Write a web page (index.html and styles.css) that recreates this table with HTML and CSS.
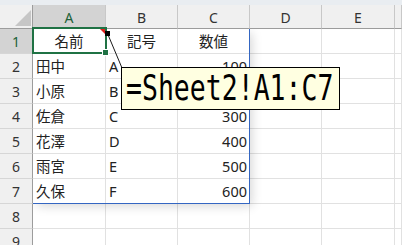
FILE: index.html
```
<!DOCTYPE html>
<html lang="ja">
<head>
<meta charset="utf-8">
<title>Sheet1</title>
<link rel="stylesheet" href="styles.css">
</head>
<body>
<div class="sheet">
  <div class="topbar"></div>
  <div class="grid">
    <div class="hd corner"><span class="corner-tri"></span></div>
    <div class="hd col sel">A</div>
    <div class="hd col">B</div>
    <div class="hd col">C</div>
    <div class="hd col">D</div>
    <div class="hd col">E</div>
    <div class="hd col"></div>

    <div class="hd row sel">1</div>
    <div class="c ctr">名前</div><div class="c ctr">記号</div><div class="c ctr">数値</div><div class="c"></div><div class="c"></div><div class="c"></div>

    <div class="hd row">2</div>
    <div class="c">田中</div><div class="c">A</div><div class="c num">100</div><div class="c"></div><div class="c"></div><div class="c"></div>

    <div class="hd row">3</div>
    <div class="c">小原</div><div class="c">B</div><div class="c num">200</div><div class="c"></div><div class="c"></div><div class="c"></div>

    <div class="hd row">4</div>
    <div class="c">佐倉</div><div class="c">C</div><div class="c num">300</div><div class="c"></div><div class="c"></div><div class="c"></div>

    <div class="hd row">5</div>
    <div class="c">花澤</div><div class="c">D</div><div class="c num">400</div><div class="c"></div><div class="c"></div><div class="c"></div>

    <div class="hd row">6</div>
    <div class="c">雨宮</div><div class="c">E</div><div class="c num">500</div><div class="c"></div><div class="c"></div><div class="c"></div>

    <div class="hd row">7</div>
    <div class="c">久保</div><div class="c">F</div><div class="c num">600</div><div class="c"></div><div class="c"></div><div class="c"></div>

    <div class="hd row">8</div>
    <div class="c"></div><div class="c"></div><div class="c"></div><div class="c"></div><div class="c"></div><div class="c"></div>

    <div class="hd row">9</div>
    <div class="c"></div><div class="c"></div><div class="c"></div><div class="c"></div><div class="c"></div><div class="c"></div>
  </div>

  <!-- linked picture frame over A1:C7 -->
  <div class="picture-frame"></div>

  <!-- active cell A1 -->
  <div class="selection"></div>
  <div class="fill-handle"></div>
  <div class="note-mark"></div>

  <!-- formula callout -->
  <svg class="leader" width="402" height="245" viewBox="0 0 402 245">
    <line x1="107.5" y1="33.5" x2="122" y2="68" stroke="#1a1a1a" stroke-width="1"/>
    <rect x="105" y="31" width="5" height="5" fill="#000"/>
  </svg>
  <div class="callout"><span class="callout-text">=Sheet2!A1:C7</span></div>
</div>
</body>
</html>
```
FILE: styles.css
```
* {
  box-sizing: border-box;
}

html, body {
  margin: 0;
  padding: 0;
  background: #ffffff;
}

.sheet {
  position: relative;
  width: 402px;
  height: 245px;
  overflow: hidden;
  font-family: "Noto Sans", "Noto Sans CJK JP", sans-serif;
  color: #222222;
}

.topbar {
  height: 5px;
  background: #e9edf1;
}

.grid {
  display: grid;
  grid-template-columns: 33px 73px 72px 72px 72px 73px 1fr;
  grid-template-rows: 24px repeat(9, 25px);
}

/* headers */
.hd {
  position: relative;
  z-index: 3;
  background: #f0f0f0;
  color: #333333;
  font-size: 14px;
  display: flex;
  align-items: center;
  justify-content: center;
}

.hd.col {
  border-right: 1px solid #c8c8c8;
  border-bottom: 1px solid #9c9c9c;
  padding-top: 1px;
}

.hd.row {
  border-right: 1px solid #9c9c9c;
  border-bottom: 1px solid #d6d6d6;
  padding-top: 1px;
}

.hd.corner {
  border-right: 1px solid #9c9c9c;
  border-bottom: 1px solid #9c9c9c;
  justify-content: flex-end;
  align-items: flex-end;
  padding: 0 1px 2px 0;
}

.corner-tri {
  width: 0;
  height: 0;
  border-bottom: 16px solid #c6c6c6;
  border-left: 16px solid transparent;
}

.hd.sel {
  background: #d3d3d3;
  color: #1d6238;
}

/* cells */
.c {
  border-right: 1px solid #e1e1e1;
  border-bottom: 1px solid #e1e1e1;
  font-size: 14.5px;
  line-height: 1;
  display: flex;
  align-items: center;
  padding: 1px 3px 0 3px;
  white-space: nowrap;
}

.c.ctr {
  justify-content: center;
}

.c.num {
  justify-content: flex-end;
  padding-right: 2px;
}

/* picture linked to another range */
.picture-frame {
  position: absolute;
  z-index: 2;
  left: 33px;
  top: 29px;
  width: 217px;
  height: 175px;
  border-right: 1px solid #3466c2;
  border-bottom: 1px solid #3466c2;
  box-shadow: 3px 3px 10px -1px rgba(0, 0, 0, 0.16);
}

.selection {
  position: absolute;
  z-index: 4;
  left: 32px;
  top: 27px;
  width: 75px;
  height: 27px;
  border: 2px solid #1f7244;
}

.fill-handle {
  position: absolute;
  z-index: 5;
  left: 103px;
  top: 50px;
  width: 5px;
  height: 5px;
  background: #1f7244;
  outline: 1px solid #ffffff;
}

.note-mark {
  position: absolute;
  z-index: 5;
  left: 100px;
  top: 29px;
  width: 0;
  height: 0;
  border-top: 5px solid #e0201b;
  border-left: 5px solid transparent;
}

.leader {
  position: absolute;
  z-index: 6;
  left: 0;
  top: 0;
  pointer-events: none;
}

.callout {
  position: absolute;
  z-index: 7;
  left: 121px;
  top: 67px;
  width: 219px;
  height: 43px;
  border: 1px solid #000000;
  background: #ffffe1;
  display: flex;
  align-items: center;
  padding-left: 4px;
}

.callout-text {
  display: inline-block;
  font-family: "DejaVu Sans Mono", "Liberation Mono", monospace;
  font-size: 26.5px;
  line-height: 1;
  color: #000000;
  white-space: nowrap;
  transform: scaleY(1.35);
  transform-origin: center;
}
```
